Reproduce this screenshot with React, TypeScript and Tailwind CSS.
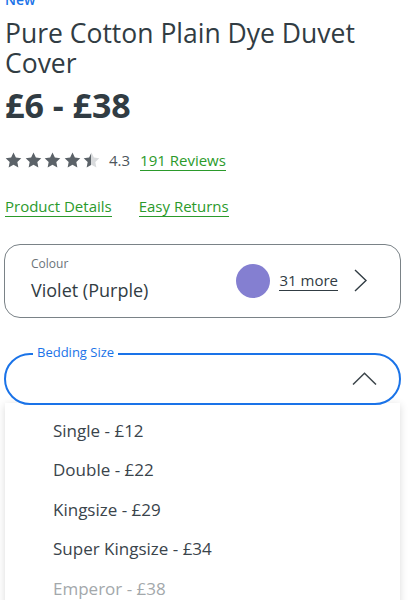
import React from "react";

const Star = ({ fill }: { fill: "full" | "half" }) => (
  <svg width="17" height="16" viewBox="0 0 24 23">
    <defs>
      <linearGradient id="halfg" x1="0" x2="1" y1="0" y2="0">
        <stop offset="50%" stopColor="#5b6268" />
        <stop offset="50%" stopColor="#d9dbdd" />
      </linearGradient>
    </defs>
    <path
      d="M12 0.8l3.4 7.2 7.8 1-5.7 5.4 1.5 7.8L12 18.4l-7 3.8 1.5-7.8L0.8 9l7.8-1z"
      fill={fill === "full" ? "#5b6268" : "url(#halfg)"}
    />
  </svg>
);

export default function App() {
  const items = [
    { t: "Single - £12", d: false },
    { t: "Double - £22", d: false },
    { t: "Kingsize - £29", d: false },
    { t: "Super Kingsize - £34", d: false },
    { t: "Emperor - £38", d: true },
  ];
  return (
    <div
      className="w-[409px] h-[600px] overflow-hidden bg-white text-[#313c43]"
      style={{ fontFamily: '"Open Sans", "Noto Sans", sans-serif' }}
    >
      <div className="px-[5px] -mt-[9px]">
        <div className="text-[14px] leading-[18px] font-semibold text-[#1a73e8]">New</div>
        <h1 className="mt-[9px] text-[26.5px] leading-[30px] font-normal text-[#313c43]">
          Pure Cotton Plain Dye Duvet Cover
        </h1>
        <div className="mt-[8px] text-[34px] leading-[38px] font-bold text-[#313c43]">£6 - £38</div>
        <div className="mt-[25px] flex items-center">
          <div className="flex gap-[2.5px]">
            <Star fill="full" />
            <Star fill="full" />
            <Star fill="full" />
            <Star fill="full" />
            <Star fill="half" />
          </div>
          <span className="ml-[9px] text-[15px] text-[#4d565c]">4.3</span>
          <span className="ml-[10px] text-[15px] leading-[20px] text-[#2b9a2b] border-b-[1.5px] border-[#2b9a2b]">
            191 Reviews
          </span>
        </div>
        <div className="mt-[24.5px] flex gap-[27px] text-[15px] leading-[20px] text-[#2b9a2b]">
          <span className="border-b-[1.5px] border-[#2b9a2b]">Product Details</span>
          <span className="border-b-[1.5px] border-[#2b9a2b]">Easy Returns</span>
        </div>
      </div>

      <div className="ml-[4px] w-[397px] mt-[26.5px] h-[74px] rounded-[16px] border border-[#7a8287] flex items-center pl-[26px] pr-[33px]">
        <div className="flex-1 -mt-[3px]">
          <div className="text-[12px] leading-[16px] text-[#6b7378]">Colour</div>
          <div className="mt-[6px] text-[18px] leading-[24px] text-[#313c43]">Violet (Purple)</div>
        </div>
        <div className="w-[34px] h-[34px] rounded-full bg-[#847fd1]" />
        <span className="ml-[9px] text-[15px] leading-[20px] border-b border-[#313c43] text-[#313c43]">31 more</span>
        <svg className="ml-[16px]" width="13" height="23" viewBox="0 0 13 23">
          <path d="M1 1L12 11.5 1 22" fill="none" stroke="#313c43" strokeWidth="1.4" />
        </svg>
      </div>

      <div className="relative ml-[4px] w-[397px] mt-[35px]">
        <div className="relative z-10 h-[52px] rounded-full border-2 border-[#1a73e8] bg-white flex items-center justify-end pr-[22px]">
          <div className="absolute -top-[11px] left-[27px] bg-white px-[4px] text-[13px] leading-[16px] text-[#1a73e8]">
            Bedding Size
          </div>
          <svg width="25" height="13" viewBox="0 0 25 13">
            <path d="M1 12.5L12.5 1.2 24 12.5" fill="none" stroke="#3d464c" strokeWidth="1.5" />
          </svg>
        </div>
        <div className="mx-[1px] -mt-[2px] bg-white shadow-[0_2px_8px_rgba(0,0,0,0.15)] pt-[8px] pb-[20px]">
          {items.map((it) => (
            <div
              key={it.t}
              className={`pl-[48px] h-[39.5px] flex items-center text-[17px] ${it.d ? "text-[#a3a8ab]" : "text-[#3a444b]"}`}
            >
              {it.t}
            </div>
          ))}
        </div>
      </div>
    </div>
  );
}
